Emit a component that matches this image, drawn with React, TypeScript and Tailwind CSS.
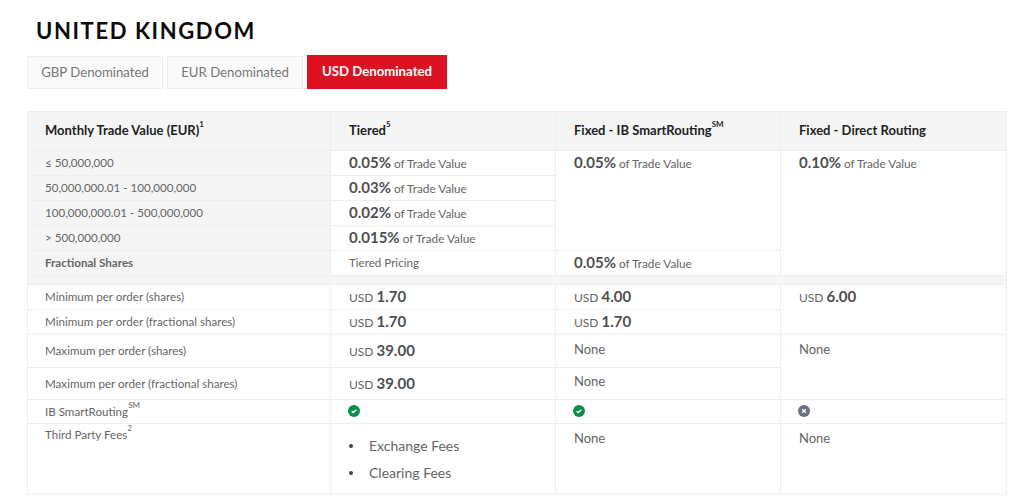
const Pct = ({ value }: { value: string }) => (
  <>
    <span className="text-[15px] font-bold text-[#4f4f4f]">{value}</span>
    <span className="ml-[3px] text-[11.8px]">of Trade Value</span>
  </>
);

const Usd = ({ value }: { value: string }) => (
  <>
    <span className="text-[12px]">USD</span>
    <span className="ml-[3px] text-[15px] font-bold text-[#4f4f4f]">{value}</span>
  </>
);

const Sup = ({ children }: { children: React.ReactNode }) => (
  <sup className="text-[8px] leading-none align-[4px]">{children}</sup>
);

const Yes = () => (
  <svg width="12" height="12" viewBox="0 0 12 12" className="block">
    <circle cx="6" cy="6" r="6" fill="#0d8f4c" />
    <path d="M3.6 6.2 5.2 7.6 8.4 4.8" fill="none" stroke="#fff" strokeWidth="1.4" />
  </svg>
);

const No = () => (
  <svg width="12" height="12" viewBox="0 0 12 12" className="block">
    <circle cx="6" cy="6" r="6" fill="#6b7280" />
    <path d="M4.2 4.2 7.8 7.8M7.8 4.2 4.2 7.8" fill="none" stroke="#fff" strokeWidth="1.3" />
  </svg>
);

const base = "border border-[#eeeeee] pr-[17px] align-top text-[11.6px] text-[#666666] leading-[15px]";
const cell = base + " pl-[18px] pt-[4px]";
const first = base + " pl-[17px] pt-[4px]";
const label = first + " bg-[#f5f5f5] text-[#555555]";
const headBase = "border border-[#eeeeee] bg-[#f5f5f5] pr-[17px] text-left align-middle text-[13px] font-bold text-[#222222]";

const tab = "flex h-[33px] w-[136px] items-center justify-center border border-[#eeeeee] bg-[#fafafa] text-[#777777]";

export default function App() {
  return (
    <div className="h-[501px] w-[1024px] overflow-hidden bg-white font-['Lato',sans-serif]">
      <h1 className="pl-9 pt-[17px] text-[22px] font-bold leading-[28px] tracking-[1.6px] text-[#0c0c0c]">
        UNITED KINGDOM
      </h1>
      <div className="mt-[10px] ml-[27px] flex items-end gap-1 text-[13.2px]">
        <div className={tab}>GBP Denominated</div>
        <div className={tab}>EUR Denominated</div>
        <div className="flex h-[34px] w-[140px] items-center justify-center bg-[#dc1222] font-bold text-white">
          USD Denominated
        </div>
      </div>
      <table className="mt-[22px] ml-[27px] w-[979px] table-fixed border-collapse">
        <colgroup>
          <col className="w-[303px]" />
          <col className="w-[225px]" />
          <col className="w-[225px]" />
          <col className="w-[226px]" />
        </colgroup>
        <thead>
          <tr className="h-[39px]">
            <th className={headBase + " pl-[17px]"}>
              Monthly Trade Value (EUR)<Sup>1</Sup>
            </th>
            <th className={headBase + " pl-[18px]"}>
              Tiered<Sup>5</Sup>
            </th>
            <th className={headBase + " pl-[18px]"}>
              Fixed - IB SmartRouting<Sup>SM</Sup>
            </th>
            <th className={headBase + " pl-[18px]"}>Fixed - Direct Routing</th>
          </tr>
        </thead>
        <tbody>
          <tr className="h-[25px]">
            <td className={label}>≤ 50,000,000</td>
            <td className={cell}><Pct value="0.05%" /></td>
            <td className={cell} rowSpan={4}><Pct value="0.05%" /></td>
            <td className={cell} rowSpan={5}><Pct value="0.10%" /></td>
          </tr>
          <tr className="h-[25px]">
            <td className={label}>50,000,000.01 - 100,000,000</td>
            <td className={cell}><Pct value="0.03%" /></td>
          </tr>
          <tr className="h-[25px]">
            <td className={label}>100,000,000.01 - 500,000,000</td>
            <td className={cell}><Pct value="0.02%" /></td>
          </tr>
          <tr className="h-[25px]">
            <td className={label}>&gt; 500,000,000</td>
            <td className={cell}><Pct value="0.015%" /></td>
          </tr>
          <tr className="h-[25px]">
            <td className={label + " font-bold"}>Fractional Shares</td>
            <td className={cell}>Tiered Pricing</td>
            <td className={cell}><Pct value="0.05%" /></td>
          </tr>
          <tr className="h-[9px]">
            <td colSpan={4} className="border border-[#eeeeee] bg-[#f5f5f5] p-0" />
          </tr>
          <tr className="h-[25px]">
            <td className={first}>Minimum per order (shares)</td>
            <td className={cell}><Usd value="1.70" /></td>
            <td className={cell}><Usd value="4.00" /></td>
            <td className={cell} rowSpan={2}><Usd value="6.00" /></td>
          </tr>
          <tr className="h-[25px]">
            <td className={first}>Minimum per order (fractional shares)</td>
            <td className={cell}><Usd value="1.70" /></td>
            <td className={cell}><Usd value="1.70" /></td>
          </tr>
          <tr className="h-[33px]">
            <td className={base + " pl-[17px] pt-[8px]"}>Maximum per order (shares)</td>
            <td className={base + " pl-[18px] pt-[8px]"}><Usd value="39.00" /></td>
            <td className={base + " pl-[18px] pt-[7px] text-[13px]"}>None</td>
            <td className={base + " pl-[18px] pt-[7px] text-[13px]"} rowSpan={2}>None</td>
          </tr>
          <tr className="h-[32px]">
            <td className={base + " pl-[17px] pt-[8px]"}>Maximum per order (fractional shares)</td>
            <td className={base + " pl-[18px] pt-[8px]"}><Usd value="39.00" /></td>
            <td className={base + " pl-[18px] pt-[6px] text-[13px]"}>None</td>
          </tr>
          <tr className="h-[24px]">
            <td className={first}>IB SmartRouting<Sup>SM</Sup></td>
            <td className={base + " pl-[17px] pt-[5px]"}><Yes /></td>
            <td className={base + " pl-[17px] pt-[5px]"}><Yes /></td>
            <td className={base + " pl-[17px] pt-[5px]"}><No /></td>
          </tr>
          <tr className="h-[71px]">
            <td className={base + " pl-[17px] pt-[3px]"}>Third Party Fees<Sup>2</Sup></td>
            <td className={base + " pl-[18px] pt-[14px] text-[14px]"}>
              <ul>
                <li className="mb-[12px] flex items-center gap-[16px]">
                  <span className="h-1 w-1 rounded-full bg-[#444444]" />
                  Exchange Fees
                </li>
                <li className="flex items-center gap-[16px]">
                  <span className="h-1 w-1 rounded-full bg-[#444444]" />
                  Clearing Fees
                </li>
              </ul>
            </td>
            <td className={base + " pl-[18px] pt-[7px] text-[13px]"}>None</td>
            <td className={base + " pl-[18px] pt-[7px] text-[13px]"}>None</td>
          </tr>
        </tbody>
      </table>
    </div>
  );
}
